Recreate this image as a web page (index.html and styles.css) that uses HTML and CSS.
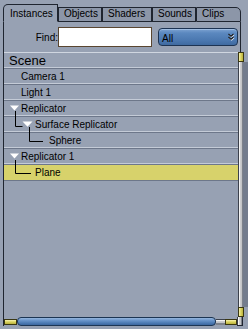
FILE: index.html
```html
<!DOCTYPE html>
<html>
<head>
<meta charset="utf-8">
<link rel="stylesheet" href="styles.css">
</head>
<body>
<div class="app">
  <div class="tabs">
    <div class="tab active first">Instances</div>
    <div class="tab w-objects">Objects</div>
    <div class="tab w-shaders">Shaders</div>
    <div class="tab w-sounds">Sounds</div>
    <div class="tab last">Clips</div>
  </div>
  <div class="panel">
    <div class="find-row">
      <label class="find-label">Find:</label>
      <div class="find-input"></div>
      <div class="select">
        <span>All</span>
        <svg class="chev" width="8" height="9" viewBox="0 0 8 9"><path d="M1.5 2 L4 4.3 L6.5 2 M1.5 5 L4 7.3 L6.5 5" fill="none" stroke="#e8eef8" stroke-width="1.2" transform="translate(0.6 0.6)"/><path d="M1.5 2 L4 4.3 L6.5 2 M1.5 5 L4 7.3 L6.5 5" fill="none" stroke="#111" stroke-width="1.1"/></svg>
      </div>
    </div>
    <div class="list-area">
      <div class="list">
        <div class="row scene">Scene</div>
        <div class="row item">Camera 1</div>
        <div class="row item">Light 1</div>
        <div class="row">
          <svg class="gut" width="17" height="15" viewBox="0 0 17 15"><polygon points="6,4.5 15,4.5 10.5,9.5" fill="#fff"/></svg>
          <span>Replicator</span>
        </div>
        <div class="row">
          <svg class="gut" width="31" height="15" viewBox="0 0 31 15"><path d="M11.5 -6 V9.5 H18.5" fill="none" stroke="#000"/><polygon points="18.5,4.5 28.5,4.5 23.5,9.8" fill="#fff"/></svg>
          <span>Surface Replicator</span>
        </div>
        <div class="row">
          <svg class="gut" width="45" height="15" viewBox="0 0 45 15"><path d="M25.5 -6 V8.5 H39" fill="none" stroke="#000"/></svg>
          <span>Sphere</span>
        </div>
        <div class="row">
          <svg class="gut" width="17" height="15" viewBox="0 0 17 15"><polygon points="6,4.5 15,4.5 10.5,9.5" fill="#fff"/></svg>
          <span>Replicator 1</span>
        </div>
        <div class="row selected">
          <svg class="gut" width="31" height="15" viewBox="0 0 31 15"><path d="M11.5 -5 V8.5 H27" fill="none" stroke="#000"/></svg>
          <span>Plane</span>
        </div>
      </div>
      <div class="vscroll">
        <div class="ycap-v"></div>
        <div class="vtrack"></div>
        <div class="ycap-v"></div>
      </div>
      <div class="hscroll">
        <div class="ycap-h left"></div>
        <div class="hthumb"></div>
        <div class="htrack"></div>
        <div class="ycap-h right"></div>
      </div>
      <div class="corner"></div>
    </div>
  </div>
</div>
</body>
</html>
```
FILE: styles.css
```css
html, body {
  margin: 0;
  padding: 0;
}
body {
  width: 248px;
  height: 329px;
  overflow: hidden;
  background: #97a1b3;
  font-family: "Liberation Sans", Arial, sans-serif;
  font-size: 10px;
  color: #000;
}
.app {
  padding: 4px 0 0 3px;
}
.tabs {
  display: flex;
  align-items: flex-end;
  height: 18px;
  width: 238px;
}
.tab {
  box-sizing: border-box;
  height: 15px;
  border: 1px solid #1f2530;
  background: #8c96a8;
  padding: 0 0 0 5px;
  line-height: 12px;
  white-space: nowrap;
}
.tab.active {
  height: 18px;
  width: 55px;
  padding-top: 3px;
  padding-left: 6px;
  background: #97a1b3;
  border-bottom-color: #97a1b3;
}
.tab.first {
  border-top-left-radius: 5px;
}
.tab.last {
  width: 45px;
  border-top-right-radius: 5px;
}
.w-objects { width: 44px; }
.w-shaders { width: 50px; }
.w-sounds { width: 44px; }

.panel {
  box-sizing: border-box;
  width: 238px;
  border-left: 1px solid #1f2530;
  border-right: 1px solid #1f2530;
}
.find-row {
  box-sizing: border-box;
  height: 30px;
  padding-top: 5px;
  display: flex;
  align-items: flex-start;
}
.find-label {
  box-sizing: border-box;
  width: 54px;
  text-align: right;
  padding-top: 1px;
  line-height: 20px;
}
.find-input {
  box-sizing: border-box;
  width: 94px;
  height: 20px;
  background: #fff;
  border: 1px solid #5a4630;
}
.select {
  box-sizing: border-box;
  margin: 1px 0 0 6px;
  width: 80px;
  height: 18px;
  border: 1px solid #1d3352;
  border-radius: 4px;
  background: linear-gradient(#7ea3d1 0%, #5b88bf 25%, #4b78b0 70%, #3f6aa0 100%);
  box-shadow: inset 0 1px 0 #9fbde2;
  display: flex;
  align-items: flex-start;
  justify-content: space-between;
  padding: 3px 2px 0 3px;
  line-height: 13px;
}
.chev {
  margin-top: 0;
}

.list-area {
  display: grid;
  grid-template-columns: 234px 6px;
  grid-template-rows: 265px 9px;
  margin-right: -4px;
}
.list {
  border-top: 1px solid #d0d6e0;
}
.row {
  box-sizing: border-box;
  height: 16px;
  display: flex;
  align-items: center;
  border-bottom: 1px solid #6d778a;
  box-shadow: inset 0 -1px 0 #c4cbd7;
  line-height: 15px;
  white-space: nowrap;
}
.row.scene {
  font-size: 13px;
  padding-left: 5px;
}
.row.item {
  padding-left: 17px;
}
.row.selected {
  background: #d7d26b;
  box-shadow: none;
}
.gut {
  flex: none;
  overflow: visible;
  display: block;
}

.vscroll {
  display: flex;
  flex-direction: column;
}
.ycap-v {
  box-sizing: border-box;
  height: 10px;
  border: 1px solid #3a3712;
  background: linear-gradient(to right, #f7f3b4 0%, #ddd662 45%, #b8b03c 100%);
}
.vtrack {
  flex: 1;
  width: 5px;
  background: linear-gradient(to right, #3c414c 0, #3c414c 1px, #f4f4f4 1px, #f4f4f4 2px, #cfd0d2 2px, #bfc0c3 4px, #7d828b 4px);
  box-shadow: 5px 0 0 #737c8d;
}
.hscroll {
  display: flex;
  align-items: flex-start;
}
.ycap-h {
  box-sizing: border-box;
  margin-top: 2px;
  height: 6px;
  border: 1px solid #3a3712;
  background: linear-gradient(#f7f3b4 0%, #ddd662 45%, #b8b03c 100%);
}
.ycap-h.left { width: 13px; }
.ycap-h.right { width: 12px; }
.hthumb {
  box-sizing: border-box;
  width: 199px;
  height: 9px;
  border: 1px solid #1c3553;
  border-radius: 4px;
  background: linear-gradient(#95b6de 0%, #6a95ca 35%, #4d7bb4 70%, #3b679e 100%);
}
.htrack {
  margin-top: 2px;
  width: 9px;
  height: 6px;
  background: linear-gradient(#3c414c 0, #3c414c 1px, #f4f4f4 1px, #f4f4f4 2px, #cfd0d2 2px, #bfc0c3 4px, #7d828b 4px);
}
.corner {
  width: 5px;
  height: 8px;
  background: linear-gradient(to right, #3c414c 0, #3c414c 1px, #f4f4f4 1px, #f4f4f4 2px, #cfd0d2 2px, #bfc0c3 4px, #7d828b 4px);
  border-bottom: 1px solid #1f2530;
  border-right: 1px solid #1f2530;
  margin-left: -1px;
}
```
